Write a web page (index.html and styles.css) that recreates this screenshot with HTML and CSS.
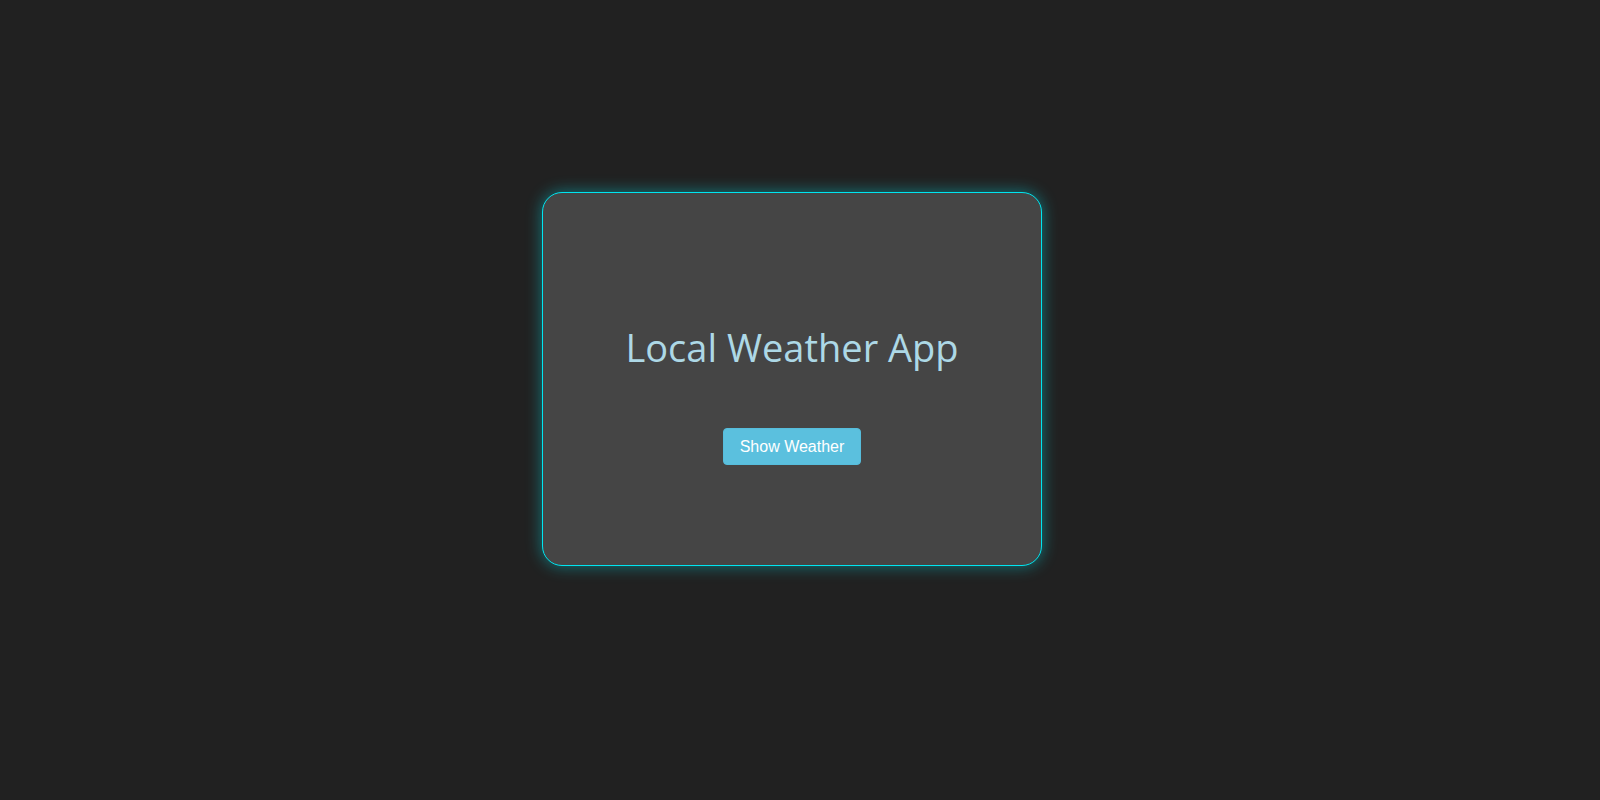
FILE: index.html
```html
<!DOCTYPE html>
<html lang="en">
<head>
<meta charset="utf-8">
<title>Local Weather App</title>
<link rel="stylesheet" href="styles.css">
</head>
<body>
<main class="page">
  <section class="card">
    <h1 class="title">Local Weather App</h1>
    <button class="btn" type="button">Show Weather</button>
  </section>
</main>
</body>
</html>
```

FILE: styles.css
```css
html, body {
  margin: 0;
  padding: 0;
  background: #212121;
  height: 100%;
}
.page {
  display: flex;
  justify-content: center;
  padding: 192px 16px 0 0;
}
.card {
  box-sizing: border-box;
  width: 500px;
  display: flex;
  flex-direction: column;
  align-items: center;
  padding: 130px 0 100px;
  background: #454545;
  border: 1px solid #00e5f0;
  border-radius: 20px;
  box-shadow: 0 0 16px rgba(0, 229, 240, 0.45);
}
.title {
  margin: 0 0 57px;
  font-family: "Open Sans", "Noto Sans", sans-serif;
  font-weight: 400;
  font-size: 38px;
  line-height: 48px;
  color: #add8e6;
}
.btn {
  font-family: "Liberation Sans", Arial, sans-serif;
  font-size: 16px;
  line-height: 23px;
  padding: 6px 16px;
  color: #fff;
  background: #5bc0de;
  border: 1px solid #56bddc;
  border-radius: 4px;
  cursor: pointer;
}
```
